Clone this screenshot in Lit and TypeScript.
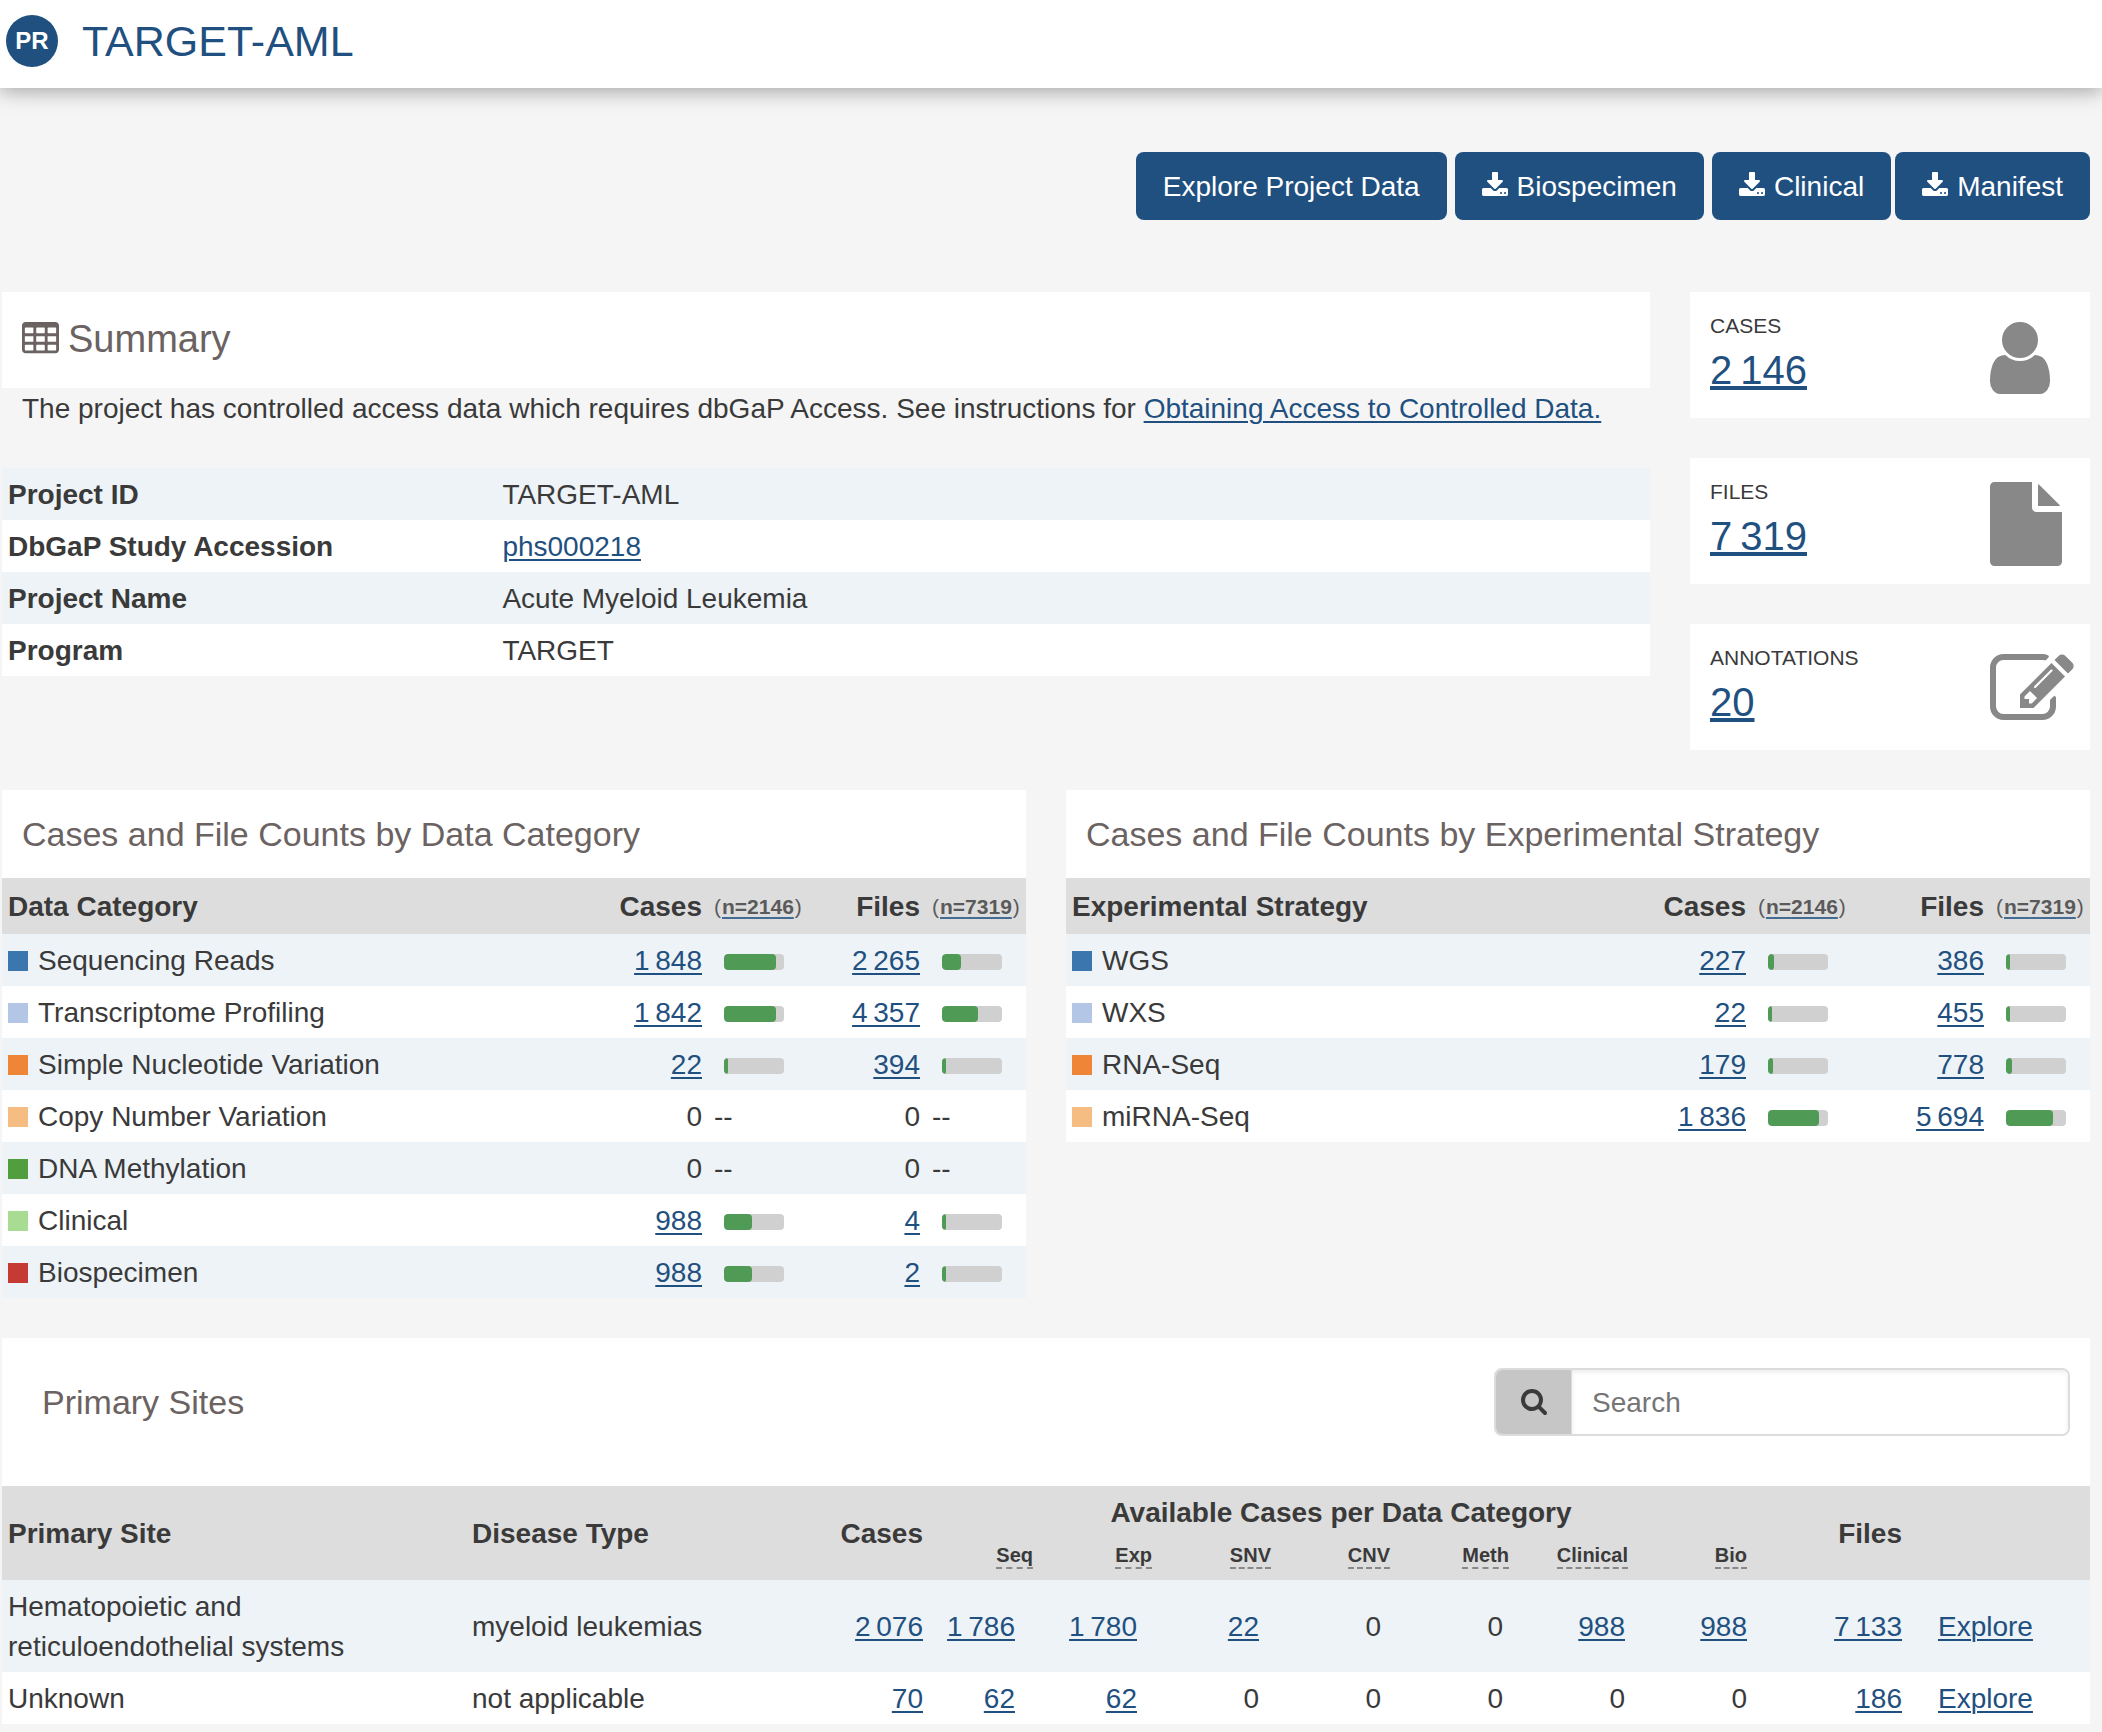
import { LitElement, html, css, svg } from "lit";
import { customElement, property } from "lit/decorators.js";
import { styleMap } from "lit/directives/style-map.js";

const THIN = "\u2009";
const grouped = (n: number) => String(n).replace(/\B(?=(\d{3})+$)/g, THIN);

const cell = (x: number, y: number) =>
  `M${x + 32} ${y}h320q14 0 23 9t9 23v192q0 14-9 23t-23 9h-320q-14 0-23-9t-9-23v-192q0-14 9-23t23-9z`;

const tablePath =
  "M1728 288v1088q0 66-47 113t-113 47h-1344q-66 0-113-47t-47-113v-1088q0-66 47-113t113-47h1344q66 0 113 47t47 113z" +
  [192, 704, 1216].flatMap((x) => [384, 768, 1152].map((y) => cell(x, y))).join("");

const icons: Record<string, { box: string; d: string }> = {
  download: {
    box: "64 0 1664 1792",
    d: "M1344 1344q0-26-19-45t-45-19-45 19-19 45 19 45 45 19 45-19 19-45zm256 0q0-26-19-45t-45-19-45 19-19 45 19 45 45 19 45-19 19-45zm128-224v320q0 40-28 68t-68 28h-1472q-40 0-68-28t-28-68v-320q0-40 28-68t68-28h465l135 136q58 56 136 56t136-56l136-136h464q40 0 68 28t28 68zm-325-569q17 41-14 70l-448 448q-18 19-45 19t-45-19l-448-448q-31-29-14-70 17-39 59-39h256v-448q0-26 19-45t45-19h256q26 0 45 19t19 45v448h256q42 0 59 39z",
  },
  table: { box: "64 0 1664 1792", d: tablePath },
  search: {
    box: "64 128 1664 1664",
    d: "M1216 832q0-185-131.5-316.5t-316.5-131.5-316.5 131.5-131.5 316.5 131.5 316.5 316.5 131.5 316.5-131.5 131.5-316.5zm512 832q0 52-38 90t-90 38q-54 0-90-38l-343-342q-179 124-399 124-143 0-273.5-55.5t-225-150-150-225-55.5-273.5 55.5-273.5 150-225 225-150 273.5-55.5 273.5 55.5 225 150 150 225 55.5 273.5q0 220-124 399l343 343q37 37 37 90z",
  },
  user: {
    box: "256 0 1792 1792",
    d: "M1536 1399q0 109-62.5 187t-150.5 78h-854q-88 0-150.5-78t-62.5-187q0-85 8.5-160.5t31.5-152 58.5-131 94-89 134.5-34.5q131 128 313 128t313-128q76 0 134.5 34.5t94 89 58.5 131 31.5 152 8.5 160.5zm-256-887q0 159-112.5 271.5t-271.5 112.5-271.5-112.5-112.5-271.5 112.5-271.5 271.5-112.5 271.5 112.5 112.5 271.5z",
  },
  file: {
    box: "128 0 1792 1792",
    d: "M1152 512v-472q22 14 36 28l408 408q14 14 28 36h-472zm-128 32q0 40 28 68t68 28h544v1056q0 40-28 68t-68 28h-1344q-40 0-68-28t-28-68v-1600q0-40 28-68t68-28h800v544z",
  },
  edit: {
    box: "0 0 1792 1792",
    d: "M888 1184l116-116-152-152-116 116v56h96v96h56zm440-720q-16-16-33 1l-350 350q-17 17-1 33t33-1l350-350q17-17 1-33zm80 594v190q0 119-84.5 203.5t-203.5 84.5h-832q-119 0-203.5-84.5t-84.5-203.5v-832q0-119 84.5-203.5t203.5-84.5h832q63 0 117 25 15 7 18 23 3 17-9 29l-49 49q-14 14-32 8-23-6-45-6h-832q-66 0-113 47t-47 113v832q0 66 47 113t113 47h832q66 0 113-47t47-113v-126q0-13 9-22l64-64q15-15 35-7t20 29zm-96-738l288 288-672 672h-288v-288zm444 132l-92 92-288-288 92-92q28-28 68-28t68 28l152 152q28 28 28 68t-28 68z",
  },
};

const icon = (name: string, cls: string) => html`<svg
  class=${cls}
  viewBox=${icons[name].box}
  aria-hidden="true"
>
  ${svg`<path fill="currentColor" fill-rule="evenodd" d=${icons[name].d}></path>`}
</svg>`;

const shared = css`
  * {
    box-sizing: border-box;
  }
  a {
    color: #1f5080;
    text-decoration: underline;
    text-decoration-thickness: 2px;
    text-underline-offset: 3px;
  }
  table {
    width: 100%;
    table-layout: fixed;
    border-collapse: collapse;
  }
  th,
  td {
    padding: 7px 6px 5px;
    text-align: left;
    vertical-align: middle;
  }
  tbody tr {
    background: #fff;
  }
  tbody tr:nth-child(odd) {
    background: #edf3f7;
  }
  thead {
    background: #dddddd;
  }
  th.num,
  td.num {
    text-align: right;
  }
`;

interface CountRow {
  name: string;
  color: string;
  cases: number;
  files: number;
}

const TOTAL_CASES = 2146;
const TOTAL_FILES = 7319;

@customElement("count-table")
export class CountTable extends LitElement {
  @property() label = "";
  @property({ attribute: false }) rows: CountRow[] = [];
  @property({ type: Boolean, reflect: true }) wide = false;

  static styles = [
    shared,
    css`
      :host {
        display: block;
      }
      .head th {
        padding: 9px 6px 7px;
      }
      .cases {
        width: 124px;
      }
      .files {
        width: 118px;
      }
      :host([wide]) .files {
        width: 138px;
      }
      .meter {
        width: 100px;
      }
      .name {
        display: flex;
        align-items: center;
        gap: 10px;
      }
      .swatch {
        width: 20px;
        height: 20px;
      }
      .total {
        display: flex;
        align-items: baseline;
        font-size: 21px;
        font-weight: 400;
        line-height: 38px;
        opacity: 0.8;
      }
      .total a {
        margin: 0 1px;
        color: #3a3a3a;
        font-weight: 700;
        text-decoration-color: #1f5080;
      }
      .bar {
        width: 60px;
        height: 16px;
        margin: 2px 0 0 10px;
        border-radius: 4px;
        background: #d0d0d0;
        overflow: hidden;
      }
      .fill {
        height: 100%;
        min-width: 4px;
        border-radius: 4px;
        background: #4f9a55;
      }
    `,
  ];

  private count(value: number, total: number) {
    return html`<td class="num">${value ? html`<a href="#">${grouped(value)}</a>` : "0"}</td>
      <td>
        ${value
          ? html`<div class="bar">
              <div class="fill" style=${styleMap({ width: `${(value / total) * 100}%` })}></div>
            </div>`
          : "--"}
      </td>`;
  }

  private total(n: number) {
    return html`<th><span class="total">(<a href="#">n=${n}</a>)</span></th>`;
  }

  render() {
    return html`<table>
      <colgroup>
        <col />
        <col class="cases" />
        <col class="meter" />
        <col class="files" />
        <col class="meter" />
      </colgroup>
      <thead>
        <tr class="head">
          <th>${this.label}</th>
          <th class="num">Cases</th>
          ${this.total(TOTAL_CASES)}
          <th class="num">Files</th>
          ${this.total(TOTAL_FILES)}
        </tr>
      </thead>
      <tbody>
        ${this.rows.map(
          (r) => html`<tr>
            <td>
              <span class="name"
                ><span class="swatch" style=${styleMap({ background: r.color })}></span>${r.name}</span
              >
            </td>
            ${this.count(r.cases, TOTAL_CASES)} ${this.count(r.files, TOTAL_FILES)}
          </tr>`,
        )}
      </tbody>
    </table>`;
  }
}

const categories: CountRow[] = [
  { name: "Sequencing Reads", color: "#3b76af", cases: 1848, files: 2265 },
  { name: "Transcriptome Profiling", color: "#b3c6e5", cases: 1842, files: 4357 },
  { name: "Simple Nucleotide Variation", color: "#ef8536", cases: 22, files: 394 },
  { name: "Copy Number Variation", color: "#f5bd82", cases: 0, files: 0 },
  { name: "DNA Methylation", color: "#519e3e", cases: 0, files: 0 },
  { name: "Clinical", color: "#a8dc93", cases: 988, files: 4 },
  { name: "Biospecimen", color: "#c53a32", cases: 988, files: 2 },
];

const strategies: CountRow[] = [
  { name: "WGS", color: "#3b76af", cases: 227, files: 386 },
  { name: "WXS", color: "#b3c6e5", cases: 22, files: 455 },
  { name: "RNA-Seq", color: "#ef8536", cases: 179, files: 778 },
  { name: "miRNA-Seq", color: "#f5bd82", cases: 1836, files: 5694 },
];

const cards = [
  { label: "CASES", value: 2146, icon: "user" },
  { label: "FILES", value: 7319, icon: "file" },
  { label: "ANNOTATIONS", value: 20, icon: "edit" },
];

const siteColumns = ["Seq", "Exp", "SNV", "CNV", "Meth", "Clinical", "Bio"];

const sites = [
  {
    site: "Hematopoietic and reticuloendothelial systems",
    disease: "myeloid leukemias",
    counts: [2076, 1786, 1780, 22, 0, 0, 988, 988],
    files: 7133,
  },
  { site: "Unknown", disease: "not applicable", counts: [70, 62, 62, 0, 0, 0, 0, 0], files: 186 },
];

@customElement("app-root")
export class AppRoot extends LitElement {
  static styles = [
    shared,
    css`
      :host {
        display: block;
        min-height: 100vh;
        box-sizing: border-box;
        padding-bottom: 8px;
        background: #f5f5f5;
        color: #3a3a3a;
        font: 28px/40px "Liberation Sans", Arial, sans-serif;
      }
      h1,
      h2,
      p {
        margin: 0;
        font-weight: 400;
      }
      .top {
        display: flex;
        align-items: center;
        gap: 24px;
        height: 88px;
        padding: 0 6px 6px;
        background: #fff;
        color: #1f5080;
        box-shadow: 0 2px 32px rgba(0, 0, 0, 0.1), 0 4px 16px rgba(0, 0, 0, 0.24);
      }
      .badge {
        display: grid;
        place-items: center;
        width: 52px;
        height: 52px;
        border-radius: 50%;
        background: #1f5080;
        color: #fff;
        font-size: 24px;
        font-weight: 700;
      }
      .top h1 {
        font-size: 43px;
      }
      main {
        display: flex;
        flex-direction: column;
        gap: 40px;
        padding: 64px 12px 0 2px;
      }
      .actions {
        display: flex;
        justify-content: flex-end;
        gap: 8px;
        margin-bottom: 32px;
      }
      .btn {
        display: flex;
        align-items: center;
        gap: 9px;
        height: 68px;
        padding: 2px 27px 0;
        border: 0;
        border-radius: 8px;
        background: #1f5080;
        color: #fff;
        font: inherit;
      }
      .btn.last {
        margin-left: -4px;
      }
      .btn-icon {
        width: 26px;
        height: 28px;
        margin-bottom: 2px;
      }
      .overview {
        display: flex;
        gap: 40px;
      }
      .summary {
        flex: 1;
      }
      .summary-head {
        display: flex;
        align-items: center;
        gap: 9px;
        height: 96px;
        padding: 0 20px 2px;
        background: #fff;
        color: #6b6262;
      }
      .summary-head h2 {
        font-size: 38px;
      }
      .table-icon {
        width: 37px;
        height: 40px;
      }
      .notice {
        padding: 1px 20px 39px;
      }
      .key {
        width: 30%;
      }
      .cards {
        display: flex;
        flex-direction: column;
        gap: 40px;
        width: 400px;
      }
      .card {
        display: flex;
        justify-content: space-between;
        height: 126px;
        padding: 20px 16px 0 20px;
        background: #fff;
      }
      .card-label {
        font-size: 21px;
        line-height: 28px;
      }
      .card-value {
        font-size: 40px;
        line-height: 60px;
      }
      .card-value a {
        text-decoration-thickness: 4px;
        text-underline-offset: 2px;
        text-decoration-skip-ink: none;
      }
      .card-icon {
        width: 84px;
        height: 84px;
        margin-top: 4px;
        color: #888;
      }
      .counts {
        display: grid;
        grid-template-columns: 1fr 1fr;
        align-items: start;
        gap: 40px;
      }
      .panel {
        background: #fff;
      }
      .panel h2,
      .sites h2 {
        color: #6b6262;
        font-size: 34px;
      }
      .panel h2 {
        padding: 24px 20px;
      }
      .sites-head {
        display: flex;
        align-items: center;
        justify-content: space-between;
        height: 148px;
        padding: 0 20px 20px 40px;
        background: #fff;
      }
      .search {
        display: flex;
        width: 576px;
        height: 68px;
        border: 2px solid #dcdcdc;
        border-radius: 8px;
        overflow: hidden;
      }
      .search-label {
        display: grid;
        place-items: center;
        width: 76px;
        background: #c6c6c6;
        border-right: 1px solid #dcdcdc;
      }
      .search-icon {
        width: 26px;
        height: 26px;
      }
      .search-input {
        flex: 1;
        min-width: 0;
        padding: 2px 20px 0;
        border: 0;
        outline: 0;
        background: #fff;
        box-shadow: inset 0 2px 4px rgba(0, 0, 0, 0.08);
        color: #3a3a3a;
        font: inherit;
      }
      .search-input::placeholder {
        color: #757575;
        opacity: 1;
      }
      .c-site {
        width: 464px;
      }
      .c-cases {
        width: 128px;
      }
      .c-seq {
        width: 92px;
      }
      .c-count {
        width: 122px;
      }
      .c-files {
        width: 155px;
      }
      .c-explore {
        width: 182px;
      }
      th.group {
        text-align: center;
      }
      .subheads {
        display: flex;
        height: 42px;
        padding-top: 3px;
        font-size: 20px;
      }
      .subhead {
        display: flex;
        flex: 119 1 0;
        align-items: center;
        justify-content: flex-end;
      }
      .subhead:first-child {
        flex-grow: 98;
      }
      .subhead abbr {
        border-bottom: 2px dashed #888;
        line-height: 24px;
        text-decoration: none;
      }
      td.explore {
        padding-left: 30px;
      }
    `,
  ];

  private link(n: number) {
    return n ? html`<a href="#">${grouped(n)}</a>` : "0";
  }

  private row(key: string, value: unknown) {
    return html`<tr>
      <th scope="row" class="key">${key}</th>
      <td>${value}</td>
    </tr>`;
  }

  render() {
    return html`
      <header class="top">
        <span class="badge">PR</span>
        <h1>TARGET-AML</h1>
      </header>
      <main>
        <div class="actions">
          <button class="btn" type="button">Explore Project Data</button>
          ${["Biospecimen", "Clinical", "Manifest"].map(
            (t) => html`<button class="btn ${t === "Manifest" ? "last" : ""}" type="button">
              ${icon("download", "btn-icon")}<span>${t}</span>
            </button>`,
          )}
        </div>
        <div class="overview">
          <section class="summary">
            <div class="summary-head">${icon("table", "table-icon")}
              <h2>Summary</h2>
            </div>
            <p class="notice">
              The project has controlled access data which requires dbGaP Access. See instructions for
              <a href="#">Obtaining Access to Controlled Data.</a>
            </p>
            <table>
              <tbody>
                ${this.row("Project ID", "TARGET-AML")}
                ${this.row("DbGaP Study Accession", html`<a href="#">phs000218</a>`)}
                ${this.row("Project Name", "Acute Myeloid Leukemia")} ${this.row("Program", "TARGET")}
              </tbody>
            </table>
          </section>
          <aside class="cards">
            ${cards.map(
              (c) => html`<div class="card">
                <div>
                  <div class="card-label">${c.label}</div>
                  <div class="card-value">${this.link(c.value)}</div>
                </div>
                ${icon(c.icon, "card-icon")}
              </div>`,
            )}
          </aside>
        </div>
        <div class="counts">
          <section class="panel">
            <h2>Cases and File Counts by Data Category</h2>
            <count-table label="Data Category" .rows=${categories}></count-table>
          </section>
          <section class="panel">
            <h2>Cases and File Counts by Experimental Strategy</h2>
            <count-table wide label="Experimental Strategy" .rows=${strategies}></count-table>
          </section>
        </div>
        <section class="sites">
          <div class="sites-head">
            <h2>Primary Sites</h2>
            <div class="search">
              <label class="search-label" for="site-search" aria-label="Search"
                >${icon("search", "search-icon")}</label
              >
              <input class="search-input" id="site-search" type="text" placeholder="Search" />
            </div>
          </div>
          <table>
            <colgroup>
              <col class="c-site" />
              <col />
              <col class="c-cases" />
              ${siteColumns.map((_, i) => html`<col class=${i ? "c-count" : "c-seq"} />`)}
              <col class="c-files" />
              <col class="c-explore" />
            </colgroup>
            <thead>
              <tr>
                <th>Primary Site</th>
                <th>Disease Type</th>
                <th class="num">Cases</th>
                <th class="group" colspan="7">
                  Available Cases per Data Category
                  <div class="subheads">
                    ${siteColumns.map((c) => html`<span class="subhead"><abbr>${c}</abbr></span>`)}
                  </div>
                </th>
                <th class="num">Files</th>
                <th></th>
              </tr>
            </thead>
            <tbody>
              ${sites.map(
                (s) => html`<tr>
                  <td>${s.site}</td>
                  <td>${s.disease}</td>
                  ${s.counts.map((n) => html`<td class="num">${this.link(n)}</td>`)}
                  <td class="num">${this.link(s.files)}</td>
                  <td class="explore"><a href="#">Explore</a></td>
                </tr>`,
              )}
            </tbody>
          </table>
        </section>
      </main>
    `;
  }
}
